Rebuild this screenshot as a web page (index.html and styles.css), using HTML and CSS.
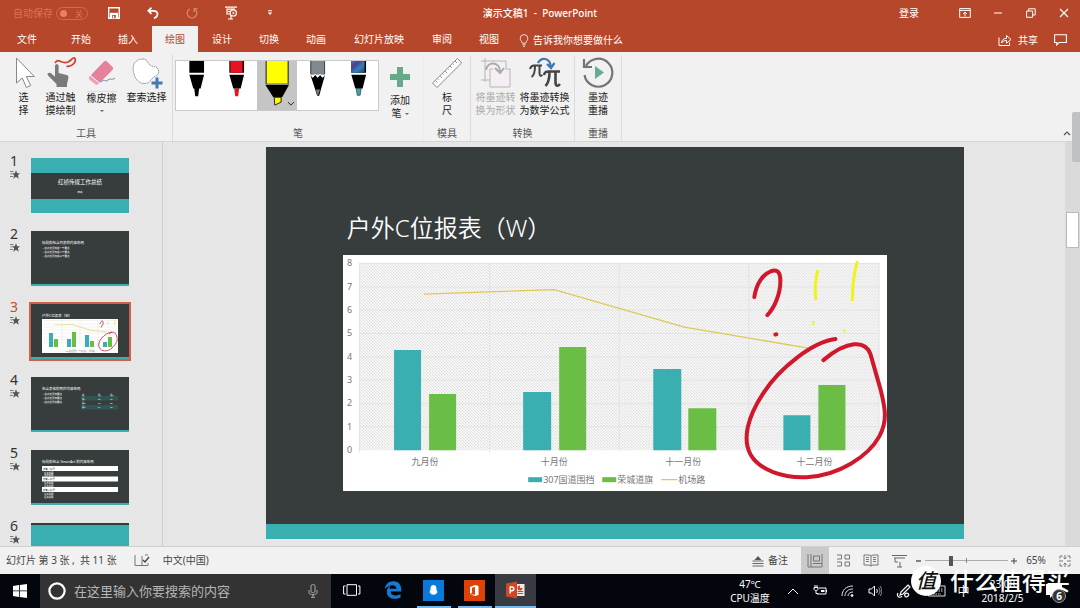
FILE: index.html
```html
<!DOCTYPE html>
<html lang="zh-CN">
<head>
<meta charset="utf-8">
<title>演示文稿1 - PowerPoint</title>
<link rel="stylesheet" href="styles.css">
</head>
<body>
<svg class="defs" width="0" height="0"><symbol id="star" viewBox="0 0 10 9"><path d="M6 .3 7.200 3.300H10L7.900 5.300 8.700 8.700 6 6.800 3.300 8.700 4.100 5.300 2 3.300h2.800zM0 1h3.500v.8H0zM.5 3.500h1.700v.8H.5zM0 6h2.800v.8H0z" fill="#555"/></symbol></svg>
<div class="desktop">
  <header class="titlebar">
    <div class="quick">
      <label class="autosave"><span>自动保存</span><span class="toggle"><input type="checkbox" disabled><span>关</span></span></label>
      <button class="qbtn" aria-label="保存"><svg width="12" height="12" viewBox="0 0 12 12"><path d="M.7.7h10.6v10.6H.7z" fill="none" stroke="#fff" stroke-width="1.4"/><path d="M2 5.8h8v5.5H2z" fill="#fff"/><path d="M4.2 8h3.6v3.3H4.2z" fill="#b7472a"/><path d="M5 8.8h1.2v2.5H5z" fill="#fff"/></svg></button>
      <button class="qbtn" aria-label="撤消"><svg width="12" height="12" viewBox="0 0 12 12" fill="none" stroke="#fff" stroke-width="1.7"><path d="M4.5.7 1.3 3.8l3.2 3M1.5 3.8h5.2c5.2 0 4.8 6.4.2 7.3"/></svg></button>
      <button class="qbtn" aria-label="重复" disabled><svg width="12" height="12" viewBox="0 0 12 12" fill="none" stroke="#d48068" stroke-width="1.4"><path d="M3.7 1.900a4.800 4.800 0 1 0 5.300.4M8.200 5V1.600h3.300"/></svg></button>
      <button class="qbtn" aria-label="从头开始"><svg width="14" height="14" viewBox="0 0 14 14" fill="none" stroke="#fff" stroke-width="1.2"><path d="M1 1.200h12M2.500 3.200h8.500M3 3v5h3M7 9v4M4 13h5M4 5.500h2"/><circle cx="9.300" cy="6.900" r="3.100"/><path d="M8.600 5.400v3l2.200-1.500z" fill="#fff" stroke="none"/></svg></button>
      <button class="qbtn" aria-label="自定义"><svg width="6" height="6" viewBox="0 0 6 6"><path d="M1 .8h4" stroke="#fff"/><path d="M.8 2.500h4.400L3 5z" fill="#fff"/></svg></button>
    </div>
    <h1 class="doc-title">演示文稿1&nbsp; - &nbsp;PowerPoint</h1>
    <div class="window-tools">
      <button class="login">登录</button>
      <button aria-label="功能区选项"><svg width="12" height="10" viewBox="0 0 12 10" fill="none" stroke="#fff"><path d="M.7.6h10.600v8.800H.7zM.7 2.400h10.600M6 8.500V4.200M4 6l2-2 2 2"/></svg></button>
      <button aria-label="最小化"><svg width="10" height="10" viewBox="0 0 10 10"><path d="M1 5h8" stroke="#fff"/></svg></button>
      <button aria-label="还原"><svg width="10" height="10" viewBox="0 0 10 10" fill="none" stroke="#fff"><path d="M.6 3h6v6.300h-6zM2.600 3V.8h6.600V7H6.800"/></svg></button>
      <button aria-label="关闭"><svg width="10" height="10" viewBox="0 0 10 10"><path d="m1 1 8 8M9 1 1 9" stroke="#fff" stroke-width="1.100"/></svg></button>
    </div>
  </header>
  <nav class="tabs">
    <button class="tab file">文件</button>
    <button class="tab">开始</button>
    <button class="tab">插入</button>
    <button class="tab active">绘图</button>
    <button class="tab">设计</button>
    <button class="tab">切换</button>
    <button class="tab">动画</button>
    <button class="tab wide">幻灯片放映</button>
    <button class="tab">审阅</button>
    <button class="tab">视图</button>
    <button class="tell"><svg width="10" height="13" viewBox="0 0 10 13" fill="none" stroke="#f3d9d2"><path d="M3.200 9.200C3.200 7.300 1.200 6.600 1.200 4.400a3.800 3.800 0 0 1 7.600 0c0 2.200-2 2.900-2 4.800zM3.400 10.800h3.200M4 12.300h2"/></svg>告诉我你想要做什么</button>
    <div class="share-tools">
      <button><svg width="14" height="12" viewBox="0 0 14 12" fill="none" stroke="#fff"><path d="M1 3.500v8h10.500V8.500M3.500 9c.3-3 2-4.600 5-4.700V1.500l4.500 4-4.500 3.700V6.500C6.300 6.500 4.800 7.300 3.500 9z"/></svg>共享</button>
      <button aria-label="批注"><svg width="13" height="12" viewBox="0 0 13 12" fill="none" stroke="#fff" stroke-width="1.100"><path d="M.6.8h11.800v7.700H5L2.800 11V8.500H.6z"/></svg></button>
    </div>
  </nav>

  <section class="ribbon">
    <div class="group tools">
      <div class="items">
        <button class="tool"><svg width="24" height="32" viewBox="0 0 24 32"><path d="M4.500 1v25l5.800-5 4.200 9.500 4.200-2-4.400-9h8z" fill="#fff" stroke="#888"/></svg><span>选<br>择</span></button>
        <button class="tool"><svg width="32" height="32" viewBox="0 0 32 32"><path d="M10 22V9c0-2.200 3.600-2.200 3.600 0v7l8 2c1.800.5 2 1.500 1.800 3L22 27v3H11.500v-3L3 18.500c-1.600-2 1-3.600 3-2.300l4 3.500z" fill="#7a7a7a"/><path d="M10 6c4-6 6 2 13-1 3-1.300 5-5 6.500-4 2.500 3-1.500 9-8 8.300" fill="none" stroke="#c9452e" stroke-width="1.700"/></svg><span>通过触<br>摸绘制</span></button>
        <button class="tool eraser"><svg width="32" height="32" viewBox="0 0 32 32"><path d="m4 19 14-14.500c1-1 2-1 3 0l5.500 5.500c1 1 .8 2-.1 3L13.500 26z" fill="#e5819a"/><path d="m4 19 9.500 7-2 1.500c-.8.500-1.500.400-2.200-.2L4 23c-1.500-1.200-1.500-2.500 0-4z" fill="#ef9fb0"/><path d="m4 18 9.500 8" stroke="#fff"/><path d="M15 25c4-4 4 1 7-2 3-2.500 3 1 7-2" fill="none" stroke="#5f8fb4"/></svg><span>橡皮擦<i class="arrow"></i></span></button>
        <button class="tool"><svg width="32" height="32" viewBox="0 0 32 32"><path d="M12 2C4 2 1 8 2.500 15S8 27 14 26.500 19 22 23 20s6-4 4-8-6-1-9-5-3-5-6-5z" fill="#fff" stroke="#999" stroke-dasharray="1.500 .5"/><path d="M26 20.500v11M20.500 26h11" stroke="#427cac" stroke-width="3"/></svg><span>套索选择</span></button>
      </div>
      <div class="group-name">工具</div>
    </div>
    <div class="group pens">
      <div class="items">
        <div class="gallery">
          <button class="pen" aria-label="黑色笔"><svg viewBox="0 0 40 50"><path d="M13 0h15v12H13zM13 14h15l-3.500 14h-7.500zM18 28h5l-1 8h-3z"/></svg></button>
          <button class="pen" aria-label="红色笔"><svg viewBox="0 0 40 50"><path d="M13 0h15v12H13z"/><path d="M14 0h12.500v12H14zM18 28h5l-1 8h-3z" fill="#e81224"/><path d="M13 14h15l-3.500 14h-7.500z"/></svg></button>
          <button class="pen chosen" aria-label="黄色荧光笔"><svg viewBox="0 0 40 50"><path d="M8 0h24v24H8z" fill="#555"/><path d="M9.500 0h21v23h-21z" fill="#ff0"/><path d="M8 24.500h24L25 37h-9z"/><path d="M17 37h7v5l-6.500 3z" fill="#ff0" stroke="#222"/><path d="m31 42 3 3 3-3" fill="none" stroke="#222"/></svg></button>
          <button class="pen" aria-label="铅笔"><svg viewBox="0 0 40 50"><path d="M13 0h15v14H13z" fill="#7f898e"/><path d="M13.500 0v14M27.500 0v14" stroke="#444"/><path d="m13 14 2.500 3 2.500-3 2.500 3 2.500-3 2.500 3 2.500-3-6 21.500h-2z"/><path d="m13 13.500 2.500 3 2.500-3 2.500 3 2.500-3 2.500 3 2.500-3" fill="none" stroke="#fff"/><path d="M18.500 29h4.500l-2.500 7z" fill="#777"/></svg></button>
          <button class="pen" aria-label="银河笔"><svg viewBox="0 0 40 50"><defs><linearGradient id="galaxy" x2="1" y2="1"><stop stop-color="#2785b5"/><stop offset=".3" stop-color="#513b91"/><stop offset=".6" stop-color="#3184b5"/><stop offset="1" stop-color="#274075"/></linearGradient></defs><path d="M13 0h15v12H13z"/><path d="M13 0h13.500v12H13z" fill="url(#galaxy)"/><path d="M13 14h15l-3.500 14h-7.500z"/><path d="M18 28h5l-1 7h-3z" fill="#38a7b5" stroke="#222" stroke-width=".6"/></svg></button>
        </div>
        <button class="tool add-pen"><svg width="22" height="22" viewBox="0 0 22 22"><path d="M8 1h6v7h7v6h-7v7H8v-7H1V8h7z" fill="#66a98b"/></svg><span>添加<br>笔<i class="arrow"></i></span></button>
      </div>
      <div class="group-name">笔</div>
    </div>
    <div class="group stencil">
      <div class="items"><button class="tool"><svg width="32" height="32" viewBox="0 0 32 32"><path d="M26.500 1.500 30.500 6 6 30.500 1.500 26z" fill="#fff" stroke="#888"/><path d="m24 4 2 2m-4.500.500 1.300 1.300M19 9l2 2m-4.500.500 1.300 1.300M14 14l2 2m-4.500.500 1.300 1.300M9 19l2 2m-4.500.500 1.300 1.300M4.500 23.500l2 2" stroke="#999"/></svg><span>标<br>尺</span></button></div>
      <div class="group-name">模具</div>
    </div>
    <div class="group convert">
      <div class="items">
        <button class="tool" disabled><svg width="32" height="32" viewBox="0 0 32 32" fill="none" stroke="#b5b5b5"><path d="M5 1v24M1 4h25v7M1 23h9"/><path d="M10 12v18h20V12h-5M10 12h3" fill="#f5eff5"/><path d="M6 13c1-9 14-9 14 2M15 11l5 5 4-5" stroke="#aaa" stroke-width="2"/></svg><span>将墨迹转<br>换为形状</span></button>
        <button class="tool"><svg width="32" height="32" viewBox="0 0 32 32" fill="none" stroke="#454545"><path d="M1 12c1-3 2-3.500 4-3.500h8M6 9c0 6-.5 9-3.500 11M10.500 9v7c0 3 1 3.500 3 2" stroke-width="2"/><path d="M15 18c1-4 3-3.500 6-3.500h10M20.500 15c0 7-1 11-4 14M26.500 15v10c0 4 2 5 4.500 2" stroke-width="2.600"/><path d="M9 6c3-6 12-6 13 4M18 7l4 4 3.500-5" stroke="#3d77b8" stroke-width="2.200"/></svg><span>将墨迹转换<br>为数学公式</span></button>
      </div>
      <div class="group-name">转换</div>
    </div>
    <div class="group replay">
      <div class="items"><button class="tool"><svg width="32" height="32" viewBox="0 0 32 32"><path d="M4 9A14 14 0 1 1 2.500 18M2 2v8h8" fill="none" stroke="#757575" stroke-width="2.200"/><path d="M13 9v13l9-6.500z" fill="#68ab90"/></svg><span>墨迹<br>重播</span></button></div>
      <div class="group-name">重播</div>
    </div>
    <button class="collapse" aria-label="折叠功能区"><svg width="8" height="6" viewBox="0 0 8 6"><path d="m1 5 3-3 3 3" fill="none" stroke="#555" stroke-width="1.200"/></svg></button>
    <div class="assist"></div>
  </section>

  <main class="workspace">
    <aside class="thumbs">
      <div class="thumb"><div class="num">1<svg><use href="#star"/></svg></div><svg class="mini" viewBox="0 0 98 55"><path class="dark" d="M0 0h98v55H0z"/><path class="teal" d="M0 0h98v15H0zM0 41h98v14H0z"/><text x="49" y="26" font-size="5.500" text-anchor="middle">红桥传媒工作总结</text><text x="49" y="35" font-size="2.500" text-anchor="middle">年终</text></svg></div>
      <div class="thumb"><div class="num">2<svg><use href="#star"/></svg></div><svg class="mini" viewBox="0 0 98 55"><path class="dark" d="M0 0h98v55H0z"/><path class="teal" d="M0 53h98v2H0z"/><text x="11" y="13" font-size="3.500">标题和包含列表的内容布局</text><g font-size="2.500"><text x="12" y="18">• 在此处添加第一个要点</text><text x="12" y="22">• 在此处添加第二个要点</text><text x="12" y="26">• 在此处添加第三个要点</text></g></svg></div>
      <div class="thumb current"><div class="num">3<svg><use href="#star"/></svg></div><svg class="mini" viewBox="0 0 98 55"><path class="dark" d="M0 0h98v55H0z"/><path class="teal" d="M0 53h98v2H0z"/><text x="11" y="13" font-size="3.500">户外C位报表（W）</text><path d="M11 15h76v34H11z" fill="#fff"/><path d="M13 16.500h73M13 20h73M13 23h73M13 26h73M13 29h73M13 33h73M13 36h73M13 39h73M31 16v27M49 16v27M67 16v27" stroke="#ddd" stroke-width=".4"/><path class="teal" d="M18 29h4v14h-4zM36 35h4v8h-4zM54 31h4v12h-4zM72 38h4v5h-4z"/><path d="M23 35h4v8h-4zM41 28h4v15h-4zM59 37h4v6h-4zM77 33h4v10h-4z" fill="#6bbe45"/><path d="m24 21 17-.5L59 26l17 2" fill="none" stroke="#dfd26a" stroke-width=".7"/><path d="M81 28c-8 1-15 10-13 15s9 5 13 1 6-7 5-11-4-7-8-3M69 20c1-4 4-4 3 0l-2 3.500" fill="none" stroke="#c12436" stroke-width=".8"/><path d="m77 17-.5 4M84 16l-.5 5" stroke="#e4e05a" stroke-width=".7"/><text class="mini-legend" x="49" y="48" font-size="2" text-anchor="middle">307国道围挡　荣城道旗　机场路</text></svg></div>
      <div class="thumb"><div class="num">4<svg><use href="#star"/></svg></div><svg class="mini" viewBox="0 0 98 55"><path class="dark" d="M0 0h98v55H0z"/><path class="teal" d="M0 53h98v2H0z"/><text x="11" y="13" font-size="3.500">包含表格的两栏内容布局</text><g font-size="2.500"><text x="12" y="18">• 在此处添加要点</text><text x="12" y="22">• 在此处添加要点</text><text x="12" y="26">• 在此处添加要点</text></g><path d="M50 19h37v4.500H50zM50 28h37v4.500H50z" fill="#315553"/><g font-size="2.200"><text x="51" y="18.500">类</text><text x="67" y="18.500">组1</text><text x="79" y="18.500">组2</text><text x="51" y="22.500">类1</text><text x="67" y="22.500">82</text><text x="79" y="22.500">95</text><text x="51" y="27">类2</text><text x="67" y="27">76</text><text x="79" y="27">88</text><text x="51" y="31">类3</text><text x="67" y="31">84</text><text x="79" y="31">90</text></g></svg></div>
      <div class="thumb"><div class="num">5<svg><use href="#star"/></svg></div><svg class="mini" viewBox="0 0 98 55"><path class="dark" d="M0 0h98v55H0z"/><path class="teal" d="M0 53h98v2H0z"/><text x="11" y="13" font-size="3.500">标题和包含 SmartArt 的内容布局</text><path d="M11 16h76v5H11zM11 26.500h76v5H11zM11 37h76v5H11z" fill="#fff"/><g font-size="2.300"><text x="13" y="23.500">任务说明</text><text x="13" y="26">任务说明</text><text x="13" y="34">任务说明</text><text x="13" y="36.500">任务说明</text><text x="13" y="45">任务说明</text><text x="13" y="48">任务说明</text><g class="ink-text"><text x="12" y="19.500">步骤 1 标题</text><text x="12" y="30">步骤 2 标题</text><text x="12" y="40.500">步骤 3 标题</text></g></g></svg></div>
      <div class="thumb"><div class="num">6<svg><use href="#star"/></svg></div><svg class="mini" viewBox="0 0 98 55"><path class="dark" d="M0 0h98v55H0z"/><path class="teal" d="M0 2h98v40H0z"/></svg></div>
    </aside>
    <div class="stage">
      <article class="slide">
        <h2>户外C位报表<span class="wide-mark" lang="zh-TW">（</span>W<span class="wide-mark" lang="zh-TW">）</span></h2>
        <svg class="chart" viewBox="343 256 544 236">
          <defs><pattern id="hatch" width="3" height="3" patternUnits="userSpaceOnUse"><path d="M0 0l3 3" stroke="#d8d8d8" stroke-width=".8"/></pattern></defs>
          <path d="M343 256h544v236H343z" fill="#fff"/>
          <path d="M359 264h520v187H359z" fill="#fbfbfb"/><path d="M359 264h520v187H359z" fill="url(#hatch)"/>
          <path d="M359 264.500h520M359 288h520M359 311h520M359 334.500h520M359 358h520M359 381h520M359 404.500h520M359 427.500h520M359.500 264v189M489.500 264v189M619 264v187M748.500 264v187M878.500 264v187" stroke="#e3e3e3" fill="none"/>
          <g fill="#3aafb2"><path d="M394 351h27v100h-27zM523 393h28v58h-28zM653 370h28v81h-28zM783 416h27v35h-27z"/><path d="M528 478h14v5h-14z"/></g>
          <g fill="#6bbe45"><path d="M429 395h27v56h-27zM559 348h27v103h-27zM688 409h28v42h-28zM818 386h27v65h-27z"/><path d="M602 478h14v5h-14z"/></g>
          <path d="m424 295 130-4.500L684 328l124 21M661 480.500h16" fill="none" stroke="#dfc855" stroke-width="1.300"/>
          <g class="axis" text-anchor="middle"><text x="349.500" y="267">8</text><text x="349.500" y="291">7</text><text x="349.500" y="314">6</text><text x="349.500" y="337">5</text><text x="349.500" y="361">4</text><text x="349.500" y="384">3</text><text x="349.500" y="407">2</text><text x="349.500" y="431">1</text><text x="349.500" y="454">0</text>
          <text x="425" y="466">九月份</text><text x="554" y="466">十月份</text><text x="683" y="466">十一月份</text><text x="814" y="466">十二月份</text></g>
          <g class="axis"><text x="543" y="484">307国道围挡</text><text x="617" y="484">荣城道旗</text><text x="678" y="484">机场路</text></g>
          <g class="ink"><path d="M754 298c2-14 9-23 17-26 6-2 9 1 9 10 0 13-6 27-13 34M775 335.500l1-.2"/><path d="M835 340C812 343 779 369 763 394c-16 24-21 46-13 61 9 16 33 24 56 23 32-1 62-21 73-41 9-17 5-30 1-47l-10-35c-5-14-23-14-47 6"/></g>
          <g class="highlight"><path d="M817.500 271c-2.500 9-3.500 19-2 30M857 262c-4 13-5 26-5 40"/><path d="M813 322v4M844 330.500v3" stroke-width="2"/></g>
        </svg>
      </article>
    </div>
    <div class="scroll"><div class="scroll-thumb"></div></div>
  </main>

  <footer class="status">
    <span>幻灯片&nbsp;第&nbsp;3&nbsp;张&nbsp;,&nbsp; 共&nbsp;11&nbsp;张</span>
    <button class="spell" aria-label="拼写检查"><svg width="16" height="13" viewBox="0 0 16 13" fill="none" stroke="#777"><path d="M1 1v10.500h7V2M8 11.500h6V9M11 1h3"/><path d="m9 6 2 2 4-5" stroke="#444" stroke-width="1.300"/></svg></button>
    <span>中文(中国)</span>
    <div class="status-right">
      <button class="notes"><svg width="12" height="12" viewBox="0 0 12 12"><path d="M.5 6h11M.5 8.500h11M.5 11h11" stroke="#666"/><path d="M2.500 5 6 1l3.500 4z" fill="#555"/></svg>备注</button>
      <button class="view on" aria-label="普通视图"><svg width="16" height="15" viewBox="0 0 16 15" fill="none" stroke="#777"><path d="M1 1v13h14V1M4 1v13M6.500 3h6v5h-6zM6 10.500h9"/></svg></button>
      <button class="view" aria-label="幻灯片浏览"><svg width="15" height="13" viewBox="0 0 15 13" fill="none" stroke="#777"><path d="M1 1h4.500v4H1M9 1h4.500v4H9zM1 8h4.500v4H1M9 8h4.500v4H9z"/></svg></button>
      <button class="view" aria-label="阅读视图"><svg width="16" height="13" viewBox="0 0 16 13" fill="none" stroke="#777"><path d="M1 1h5l2 1 2-1h5v10h-5l-2 1-2-1H1zM8 2v10M3 3.500h3M3 5.500h3M3 7.500h3M10 3.500h3M10 5.500h3M10 7.500h3"/></svg></button>
      <button class="view" aria-label="幻灯片放映"><svg width="15" height="14" viewBox="0 0 15 14" fill="none" stroke="#666"><path d="M0 1.500h15M2 4h11M3 4v4h3M8 8v5M5 13h5"/></svg></button>
      <button class="step" aria-label="缩小"><svg width="6" height="8" viewBox="0 0 6 8"><path d="M0 4h5" stroke="#444" stroke-width="1.300"/></svg></button>
      <input class="zoom" type="range" min="0" max="100" value="31" aria-label="缩放">
      <button class="step" aria-label="放大"><svg width="8" height="8" viewBox="0 0 8 8"><path d="M1 4h6M4 1v6" stroke="#444"/></svg></button>
      <button class="percent">65%</button>
      <button class="fit" aria-label="适应窗口"><svg width="12" height="12" viewBox="0 0 12 12" fill="none" stroke="#777"><path d="M1 3.500V1h2.500M8.500 1H11v2.500M11 8.500V11H8.500M3.500 11H1V8.500M6 0v4M4.500 2.500 6 4l1.500-1.500M6 12V8M4.500 9.500 6 8l1.500 1.500M0 6h4M12 6H8"/></svg></button>
    </div>
  </footer>

  <div class="taskbar">
    <button class="start" aria-label="开始"><svg width="14" height="14" viewBox="0 0 14 14"><path d="M0 2l6-1v5.500H0zM6.800.9 14 0v6.500H6.800zM0 7.300h6V13l-6-1zM6.800 7.300H14V14l-7.200-.9z" fill="#fff"/></svg></button>
    <label class="search"><svg width="18" height="18" viewBox="0 0 18 18"><circle cx="9" cy="9" r="7.600" fill="none" stroke="#fff" stroke-width="2.200"/></svg><input type="text" placeholder="在这里输入你要搜索的内容" aria-label="搜索"><svg width="10" height="14" viewBox="0 0 10 14" fill="none" stroke="#aaa"><rect x="3" y=".6" width="4" height="8" rx="1.500"/><path d="M1 6v3c0 2 8 2 8 0V6M5 10.500V13M3 13.300h4"/></svg></label>
    <button class="app" aria-label="任务视图"><svg width="18" height="12" viewBox="0 0 18 12" fill="none" stroke="#fff"><path d="M4 .7h9.500v10.600H4zM2.500 2H.6v8h1.900M15 2h1.900v8H15"/></svg></button>
    <button class="app" aria-label="Edge"><svg width="18" height="18" viewBox="0 0 18 18"><path d="M.8 8C1.500 3 5 .3 9.300.3c5 0 8 3.500 8 8.200v2H6.500c.2 4.500 6 5 10 2.500v3.600c-5 2.500-13.700 1.600-13.700-5.900 0-3 1.700-5 4-6.200-.8.900-1.200 1.900-1.300 3.200h7C12.500 3 5 3 .8 8z" fill="#1679d2"/></svg></button>
    <button class="app running" aria-label="QQ"><svg width="21" height="21" viewBox="0 0 21 21"><path d="M0 0h21v21H0z" fill="#087bd8"/><path d="M10.500 5c3 0 3 3 3 5 1.500 2 1 3 .3 2.600 0 3-6.600 3-6.600 0-.7.400-1.200-.6.300-2.600 0-2 0-5 3-5z" fill="#fff"/></svg></button>
    <button class="app running" aria-label="Office"><svg width="21" height="21" viewBox="0 0 21 21"><path d="M0 0h21v21H0z" fill="#df4207"/><path d="m6 7 5-2 3.500 1v9L11 16l-5-1.800 5 .6V7L8 7.800v5L6 14z" fill="#fff"/></svg></button>
    <button class="app running focused" aria-label="PowerPoint"><svg width="19" height="18" viewBox="0 0 19 18"><path d="M10 3h8.500v12H10z" fill="#f8e9e5"/><path d="M11.500 10.500h5.500M11.500 12.500h5.500" stroke="#cf4727"/><path d="M14 4.500V7h2.500A2.500 2.500 0 1 1 14 4.500z" fill="#cf4727"/><path d="m0 2.500 11-2v17l-11-2z" fill="#cf4727"/><path d="M4.200 12.500V6h1.700c2.600 0 2.600 3.700 0 3.700H4.200" fill="none" stroke="#fff" stroke-width="1.400"/></svg></button>
    <div class="tray">
      <div class="stack">47℃<br>CPU温度</div>
      <button class="more" aria-label="显示隐藏图标"><svg width="12" height="8" viewBox="0 0 12 8"><path d="m1 7 5-5 5 5" fill="none" stroke="#fff"/></svg></button>
      <svg width="15" height="12" viewBox="0 0 15 12" fill="none" stroke="#fff"><path d="M6 3h7v6H4V8M13.500 5v2M1 2.500h4V4c0 2-4 2-4 0zM2 0v2M4 0v2M3 6v2.500h2"/><path d="M8 5h3.500v2H8z" fill="#fff" stroke="none"/></svg>
      <svg width="13" height="12" viewBox="0 0 13 12" fill="none" stroke="#ddd"><path d="M1 11C1 5 5 1 12 1M4 11c0-4 3-7 8-7M7 11c0-2.500 2-4 5-4"/><circle cx="11" cy="10.500" r="1" fill="#fff"/></svg>
      <svg width="14" height="12" viewBox="0 0 14 12" fill="none" stroke="#fff"><path d="M1 4h2.500l3-3v10l-3-3H1zM8.500 4c1 1 1 3 0 4"/><path d="M10.500 2.500c2 2 2 5 0 7M12 1c2.500 3 2.500 7 0 10" stroke="#999"/></svg>
      <svg width="16" height="16" viewBox="0 0 16 16" fill="none" stroke="#fff" stroke-width="1.200"><path d="m5 9 7-7 2 2-7 7-3 1zM6 13c-2 3-6 0-4-3M9 11c2-2 5 0 3 2s-4 0-3-2z"/></svg>
      <svg width="18" height="12" viewBox="0 0 18 12" fill="none" stroke="#ddd"><path d="M.5 1h16.500v10H.5z"/><path d="M3 4h12M3 6h12M5 9h8" stroke-dasharray="1.500 1"/></svg>
      <span class="ime">中</span>
      <div class="stack">23:08<br>2018/2/5</div>
      <button class="notice" aria-label="通知"><svg width="16" height="14" viewBox="0 0 16 14"><path d="M0 0h16v11H7l-3 3v-3H0z" fill="#fff"/></svg><span class="badge">6</span></button>
    </div>
    <div class="watermark"><span class="seal">值</span><span>什么值得买</span></div>
  </div>
</div>
</body>
</html>
```
FILE: styles.css
```css
* { box-sizing: border-box; }
body { margin: 0; font: 10px/13px "Noto Sans", "Noto Sans CJK SC", sans-serif; color: #333; }
button, input { font: inherit; color: inherit; border: 0; padding: 0; margin: 0; background: none; }
button { display: flex; align-items: center; justify-content: center; }
h1, h2 { margin: 0; font-weight: 400; }
svg { flex: none; }
.defs { position: absolute; }
.desktop { height: 100vh; display: flex; flex-direction: column; overflow: hidden; }

.titlebar { flex: none; height: 26px; background: #b7472a; color: #fff; display: grid; grid-template-columns: 1fr auto 1fr; align-items: center; }
.doc-title { font-size: 10px; font-weight: 500; }
.quick { display: flex; align-items: center; padding-left: 13px; }
.qbtn { width: 39px; height: 24px; }
.autosave { display: flex; align-items: center; gap: 3px; color: #d7735a; margin-right: 6px; }
.toggle { display: flex; align-items: center; justify-content: space-between; width: 32px; height: 13px; border: 1px solid #d06a50; border-radius: 7px; padding: 0 4px 0 3px; font-size: 8px; }
.toggle input { appearance: none; width: 7px; height: 7px; border-radius: 50%; background: #e58069; }
.window-tools { display: flex; justify-content: flex-end; align-items: center; }
.window-tools button { width: 33px; height: 24px; }
.window-tools .login { width: 40px; margin-right: 19px; }

.tabs { flex: none; height: 26px; background: #b7472a; color: #fff; display: flex; gap: 1px; }
.tab { padding: 0 13px; white-space: nowrap; }
.tab.file { padding: 0 20px 0 17px; }
.tab.wide { padding: 0 14px; }
.tab.active { background: #f1f1f1; color: #b7472a; }
.tell { gap: 4px; padding: 2px 0 0 6px; white-space: nowrap; }
.share-tools { display: flex; gap: 16px; margin-left: auto; padding: 2px 13px 0 0; }
.share-tools button { gap: 6px; }

.ribbon { position: relative; flex: none; height: 90px; background: #f1f1f1; border-bottom: 1px solid #d5d5d5; display: flex; padding-top: 3px; }
.group { display: flex; flex-direction: column; justify-content: space-between; border-right: 1px solid #dcdcdc; padding-bottom: 1px; }
.group-name { text-align: center; color: #555; }
.items { display: flex; justify-content: center; }
.tool { flex-direction: column; justify-content: flex-start; gap: 2px; padding-top: 2px; color: #222; text-align: center; white-space: nowrap; }
.tool:disabled { color: #aaa; }
.tool span { display: block; }
.arrow { display: inline-block; vertical-align: middle; margin-left: 3px; border: 2px solid transparent; border-top-color: #666; border-bottom: 0; }
.eraser span { border-top: 1px solid #ddd; }
.eraser .arrow { display: block; width: 4px; margin: 5px auto 0; }
.tools { width: 173px; }
.tools .items { gap: 9px; padding-left: 6px; }
.pens { width: 251px; border-color: #ececec; }
.pens .items { gap: 10px; padding-right: 10px; }
.gallery { display: flex; width: 204px; height: 51px; margin-top: 5px; border: 1px solid #c9c9c9; background: #fff; }
.pen { flex: 1; align-items: flex-start; }
.pen svg { width: 100%; height: 49px; }
.pen.chosen { background: #c5c5c5; }
.add-pen { padding-top: 11px; gap: 6px; }
.stencil { width: 47px; }
.convert { width: 104px; }
.convert .items { gap: 4px; }
.replay { width: 47px; }
.collapse { margin-left: auto; align-self: flex-end; padding: 5px 9px; }
.assist { position: absolute; right: 0; top: 60px; width: 8px; height: 50px; background: #bfc1c3; border-radius: 2px 0 0 2px; z-index: 1; }

.workspace { flex: 1; min-height: 0; display: flex; background: #e6e6e6; border-bottom: 1px solid #d0d0d0; }
.thumbs { width: 163px; flex: none; border-right: 1px solid #cfcfcf; padding: 14px 0 0 10px; display: flex; flex-direction: column; gap: 14px; overflow: hidden; }
.thumb { flex: none; display: flex; gap: 10px; height: 59px; align-items: flex-start; }
.mini { width: 102px; height: 59px; padding: 2px; }
.mini text { fill: #fff; }
.mini .ink-text text { fill: #222; }
.mini .mini-legend { fill: #777; }
.num { width: 9px; margin-top: -3px; font-size: 14px; line-height: 16px; }
.num svg { display: block; width: 10px; height: 9px; margin-top: 1px; }
.current .num { color: #c64a2e; }
.current .mini { background: #d35f49; }
.dark { fill: #373d3d; }
.teal { fill: #3aafb2; }
.stage { flex: 1; min-width: 0; display: flex; justify-content: center; align-items: flex-start; padding: 5px 101px 0 103px; }
.slide { width: 100%; aspect-ratio: 698 / 392; background: #373d3d; border-bottom: 15px solid #3aafb2; padding: 9% 11% 0; color: #fff; }
.slide h2 { font-size: 24px; line-height: 36px; height: 36px; font-weight: 350; padding-left: 4px; margin-top: -1px; }
.wide-mark { font-family: "Noto Sans CJK TC", sans-serif; }
.chart { display: block; width: 100%; margin-top: 10px; }
.axis { font-size: 9px; fill: #777; }
.ink { fill: none; stroke: #d0182c; stroke-width: 4; stroke-linecap: round; stroke-linejoin: round; }
.highlight { fill: none; stroke: #f2f21d; stroke-width: 3; }
.scroll { width: 15px; background: #dadada; padding: 70px 1px 0; }
.scroll-thumb { height: 36px; background: #fff; border: 1px solid #bbb; }

.status { flex: none; height: 27px; background: #f1f1f1; color: #444; display: flex; align-items: center; padding-left: 6px; white-space: nowrap; }
.spell { margin: 0 13px 0 17px; }
.status-right { display: flex; align-self: stretch; align-items: center; margin-left: auto; padding-right: 9px; }
.notes { gap: 4px; margin-right: 13px; }
.view { width: 28px; height: 100%; }
.view.on { background: #cacaca; }
.step { width: 12px; height: 20px; }
.zoom { appearance: none; width: 83px; height: 16px; background: linear-gradient(#888, #888) center / 1px 5px no-repeat, linear-gradient(#aaa, #aaa) center / 100% 1px no-repeat; }
.zoom::-webkit-slider-thumb { appearance: none; width: 4px; height: 10px; background: #555; }
.percent { width: 32px; }
.fit { margin-left: 7px; }

.taskbar { position: relative; flex: none; height: 34px; background: #03060c; color: #fff; display: flex; }
.start { width: 40px; }
.search { display: flex; align-items: center; gap: 8px; width: 291px; background: #333; padding: 0 13px 0 8px; }
.search input { flex: 1; min-width: 0; font-size: 13px; line-height: 20px; }
.search input::placeholder { color: #b5b5b5; }
.app { width: 41px; border-bottom: 2px solid transparent; }
.running { background: linear-gradient(#76b9ed, #76b9ed) center bottom / 34px 2px no-repeat border-box; }
.running.focused { background: linear-gradient(#76b9ed, #76b9ed) center bottom / 100% 2px no-repeat border-box, #383c42; }
.tray { margin-left: auto; padding-right: 4px; display: grid; grid-template-columns: 40px 37px 27px 27px 27px 32px 34px 19px 59px 44px; align-items: center; justify-items: center; }
.more { padding-left: 9px; }
.stack { text-align: center; white-space: nowrap; line-height: 14px; }
.ime { font-size: 12px; }
.notice { position: relative; height: 30px; }
.badge { position: absolute; left: 6px; top: 13px; width: 14px; height: 14px; border-radius: 50%; background: #333; border: 1px solid #999; line-height: 12px; font-weight: 700; }
.watermark { position: absolute; right: 10px; bottom: 11px; display: flex; align-items: center; gap: 9px; font-size: 24px; line-height: 32px; font-weight: 500; white-space: nowrap; }
.seal { width: 30px; height: 30px; border-radius: 50%; background: #fff; color: #111; font-size: 20px; line-height: 29px; font-style: italic; text-align: center; }
```
